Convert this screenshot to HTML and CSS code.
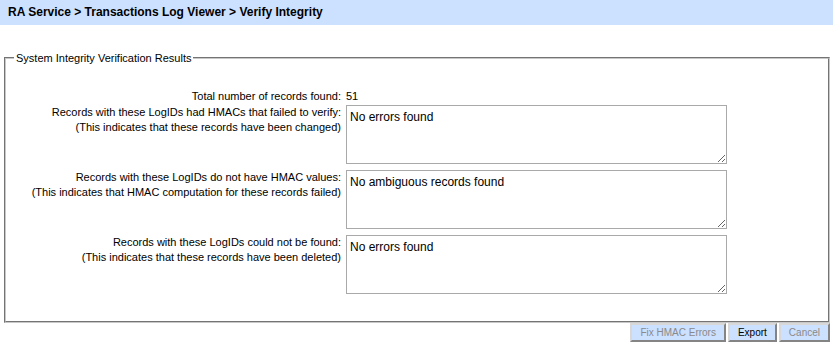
FILE: index.html
```html
<!DOCTYPE html>
<html>
<head>
<meta charset="utf-8">
<link rel="stylesheet" href="styles.css">
</head>
<body>
<div class="crumb">RA Service &gt; Transactions Log Viewer &gt; Verify Integrity</div>
<fieldset class="results">
  <legend>System Integrity Verification Results</legend>
  <div class="grid">
    <div class="label total">Total number of records found:</div>
    <div class="value total">51</div>

    <div class="label">Records with these LogIDs had HMACs that failed to verify:<br>(This indicates that these records have been changed)</div>
    <div class="value"><textarea class="box">No errors found</textarea></div>

    <div class="label">Records with these LogIDs do not have HMAC values:<br>(This indicates that HMAC computation for these records failed)</div>
    <div class="value"><textarea class="box">No ambiguous records found</textarea></div>

    <div class="label">Records with these LogIDs could not be found:<br>(This indicates that these records have been deleted)</div>
    <div class="value"><textarea class="box last">No errors found</textarea></div>
  </div>
</fieldset>
<div class="actions">
  <button class="btn" disabled>Fix HMAC Errors</button>
  <button class="btn">Export</button>
  <button class="btn" disabled>Cancel</button>
</div>
</body>
</html>
```
FILE: styles.css
```css
html, body {
  margin: 0;
  padding: 0;
  background: #fff;
  font-family: "Liberation Sans", Arial, sans-serif;
  font-size: 11px;
  color: #000;
}
.crumb {
  height: 25px;
  line-height: 25px;
  background: #cce0ff;
  padding-left: 8px;
  font-weight: bold;
  font-size: 12px;
}
.results {
  margin: 27px 3px 0 4px;
  padding: 25px 0 27px 0;
  border: 2px groove #c8c8c8;
  min-width: 0;
}
.results legend {
  margin-left: 8px;
  padding: 0 2px;
  font-size: 11px;
}
.grid {
  display: grid;
  grid-template-columns: 335px 381px;
  column-gap: 5px;
}
.label {
  text-align: right;
  line-height: 15px;
}
.value {
  line-height: 15px;
}
.total {
  padding-bottom: 1px;
}
.box {
  display: block;
  box-sizing: border-box;
  width: 381px;
  height: 59px;
  margin: 0 0 6px 0;
  border: 1px solid #a9a9a9;
  padding: 4px 3px 2px 3px;
  font-family: "Liberation Sans", Arial, sans-serif;
  font-size: 12px;
  color: #000;
  resize: both;
}
.box.last {
  margin-bottom: 0;
}
.actions {
  display: flex;
  justify-content: flex-end;
  gap: 2px;
  padding: 0 3px 0 0;
}
.btn {
  height: 19px;
  box-sizing: border-box;
  padding: 0 8px;
  background: #cce0ff;
  border: 2px outset #d8d8d8;
  font-family: "Liberation Sans", Arial, sans-serif;
  font-size: 10px;
  color: #000;
}
.btn:disabled {
  color: #8a8a8a;
}
```
